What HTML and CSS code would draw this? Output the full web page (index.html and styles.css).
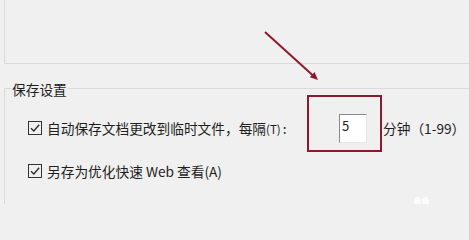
FILE: index.html
```html
<!DOCTYPE html>
<html lang="zh-CN">
<head>
<meta charset="utf-8">
<title>保存设置</title>
<link rel="stylesheet" href="styles.css">
</head>
<body>
<div class="page">
  <div class="top-panel"></div>
  <div class="group">
    <span class="group-title">保存设置</span>
    <div class="row row-first">
      <span class="check"><svg viewBox="0 0 12 12" width="12" height="12"><path d="M2 6.2 L4.8 9 L10.2 2.8" fill="none" stroke="#2b2b2b" stroke-width="1.3"/></svg></span>
      <span class="label label-fixed">自动保存文档更改到临时文件，每隔<span class="key">(T)</span>:</span>
      <span class="field">5</span>
      <span class="unit">分钟（1-99）</span>
    </div>
    <div class="row row-second">
      <span class="check"><svg viewBox="0 0 12 12" width="12" height="12"><path d="M2 6.2 L4.8 9 L10.2 2.8" fill="none" stroke="#2b2b2b" stroke-width="1.3"/></svg></span>
      <span class="label">另存为优化快速 Web 查看(A)</span>
    </div>
  </div>
  <div class="highlight"></div>
  <svg class="arrow" viewBox="0 0 469 204" width="469" height="204">
    <line x1="265" y1="32" x2="313" y2="75.5" stroke="#8b1a2e" stroke-width="2"/>
    <polygon points="318,80 309.8,77.2 314.6,71.9" fill="#8b1a2e"/>
  </svg>
  <span class="mark"><i></i><i></i></span>
</div>
</body>
</html>
```
FILE: styles.css
```css
html, body {
  margin: 0;
  padding: 0;
  background: #f0f0f0;
}
.page {
  position: relative;
  width: 469px;
  height: 204px;
  overflow: hidden;
  font-family: "Noto Sans CJK SC", "Noto Sans", sans-serif;
  font-size: 13.7px;
  color: #1e1e1e;
}
.top-panel {
  margin-left: 4px;
  height: 63px;
  border-left: 1px solid #dadada;
  border-bottom: 1px solid #dadada;
}
.group {
  margin: 24px 0 0 4px;
  height: 200px;
  border-top: 1px solid #dadada;
  border-left: 1px solid #dadada;
}
.group-title {
  display: block;
  width: max-content;
  margin: -10px 0 0 6px;
  padding: 0 1px;
  line-height: 20px;
  background: #f0f0f0;
}
.row {
  display: flex;
  align-items: center;
  padding-left: 23px;
}
.row-first {
  margin-top: 14px;
  height: 30px;
}
.row-second {
  margin-top: 18px;
  height: 20px;
}
.check {
  box-sizing: border-box;
  width: 14px;
  height: 14px;
  border: 1px solid #333;
  background: #f0f0f0;
  display: flex;
  align-items: center;
  justify-content: center;
  flex: 0 0 auto;
}
.label {
  margin-left: 5px;
  line-height: 20px;
  white-space: nowrap;
}
.label-fixed {
  flex: 0 0 292px;
}
.key {
  font-size: 11.5px;
  margin-right: 2px;
}
.field {
  box-sizing: border-box;
  width: 28px;
  height: 29px;
  background: #fff;
  border-top: 1px solid #8a8a8a;
  border-left: 1px solid #8a8a8a;
  border-right: 1px solid #e6e6e6;
  border-bottom: 1px solid #e6e6e6;
  padding: 2px 0 0 2px;
  font-size: 13px;
  line-height: 18px;
  color: #222;
}
.unit {
  margin-left: 16px;
  line-height: 20px;
  white-space: nowrap;
}
.highlight {
  position: absolute;
  left: 307px;
  top: 95px;
  width: 75px;
  height: 57px;
  box-sizing: border-box;
  border: 2px solid #8b1a2e;
}
.arrow {
  position: absolute;
  left: 0;
  top: 0;
}
.mark {
  position: absolute;
  left: 414px;
  top: 197px;
  display: flex;
  gap: 1px;
}
.mark i {
  display: block;
  width: 7px;
  height: 9px;
  border-radius: 50%;
  background: #fbfbfb;
}
```
